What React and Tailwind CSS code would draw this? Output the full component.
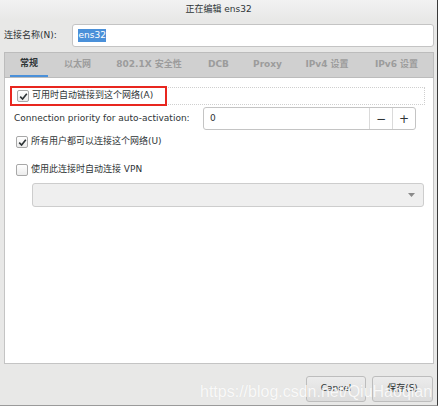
import React from "react";

const tabs = [
  { label: "常规", w: "w-[38px]" },
  { label: "以太网", w: "w-[59px]" },
  { label: "802.1X 安全性", w: "w-[84px]" },
  { label: "DCB", w: "w-[55px]" },
  { label: "Proxy", w: "w-[43px]" },
  { label: "IPv4 设置", w: "w-[76px]" },
  { label: "IPv6 设置", w: "w-[63px]" },
];

const CheckBox = ({ checked }) => (
  <span className="w-[12px] h-[12px] rounded-[2px] border border-[#a8a8a8] bg-gradient-to-b from-white to-[#ececec] flex items-center justify-center">
    {checked && (
      <svg width="9" height="9" viewBox="0 0 9 9">
        <path d="M1.2 4.6 L3.6 7 L7.8 1.8" fill="none" stroke="#2e3436" strokeWidth="1.6" />
      </svg>
    )}
  </span>
);

const App = () => {
  return (
    <div
      className="w-[440px] h-[410px] bg-white relative overflow-hidden text-[9px] text-[#2e3436]"
      style={{ fontFamily: '"DejaVu Sans", "Noto Sans CJK SC", sans-serif' }}
    >
      <div className="w-[438px] h-[406px] bg-[#e8e8e7] border-r border-b border-r-[#3a3a3a] border-b-[#9a9a9a] flex flex-col">
        {/* title bar */}
        <div className="h-[20px] flex items-center justify-center bg-gradient-to-b from-[#f2f2f2] to-[#e8e8e7]">
          正在编辑 ens32
        </div>

        {/* connection name */}
        <div className="flex items-center h-[23px] mt-[4px] pl-[4px] pr-[3px]">
          <span className="w-[68px]">连接名称(N):</span>
          <div className="flex-1 h-full bg-white border border-[#c4c4c4] rounded-[3px] flex items-center pl-[5px]">
            <span className="bg-[#4a90d9] text-white leading-[13px] px-[0.5px]">ens32</span>
          </div>
        </div>

        {/* notebook */}
        <div className="mt-[5px] mx-[4px] w-[430px] flex flex-col h-[312px]">
          <div className="h-[26px] bg-[#d0d0d0] border border-[#bcbcbc] flex items-stretch pl-[5px] font-bold text-[#9c9c9c] whitespace-nowrap">
            {tabs.map((t, i) => (
              <div
                key={t.label}
                className={
                  i === 0
                    ? `${t.w} flex items-center justify-center text-[#2e3436] border-b-2 border-[#4a90d9]`
                    : `${t.w} flex items-center justify-center`
                }
              >
                {t.label}
              </div>
            ))}
          </div>

          <div className="flex-1 bg-white border border-t-0 border-[#c4c4c4] relative">
            {/* auto connect */}
            <div className="mt-[8px] ml-[5px] mr-[8px] h-[20px] relative flex items-center">
              <div className="absolute inset-y-[1px] left-0 right-0 border border-dotted border-[#cfcfcf]" />
              <div className="absolute top-0 left-0 w-[157px] h-[20px] border-2 border-[#e8261f]" />
              <div className="relative flex items-center gap-[3px] pl-[7px]">
                <CheckBox checked />
                <span>可用时自动链接到这个网络(A)</span>
              </div>
            </div>

            {/* priority */}
            <div className="flex items-center mt-[1px] ml-[9px] mr-[17px] h-[23px]">
              <span className="w-[189px]">Connection priority for auto-activation:</span>
              <div className="flex-1 h-full border border-[#c4c4c4] rounded-[3px] flex items-stretch">
                <div className="flex-1 flex items-center pl-[6px]">0</div>
                <div className="w-[23px] border-l border-[#dadada] flex items-center justify-center text-[12px]">−</div>
                <div className="w-[23px] border-l border-[#dadada] flex items-center justify-center text-[12px]">+</div>
              </div>
            </div>

            {/* all users */}
            <div className="flex items-center gap-[3px] ml-[11px] mt-[5px] h-[14px]">
              <CheckBox checked />
              <span>所有用户都可以连接这个网络(U)</span>
            </div>

            {/* vpn */}
            <div className="flex items-center gap-[3px] ml-[11px] mt-[14px] h-[14px]">
              <CheckBox />
              <span>使用此连接时自动连接 VPN</span>
            </div>

            <div className="ml-[27px] mr-[9px] mt-[6px] h-[24px] bg-[#efefef] border border-[#cdcdcd] rounded-[3px] flex items-center justify-end pr-[8px]">
              <svg width="7" height="4" viewBox="0 0 7 4">
                <path d="M0 0 H7 L3.5 4 Z" fill="#8a8a8a" />
              </svg>
            </div>
          </div>
        </div>

        {/* buttons */}
        <div className="flex justify-end gap-[6px] pr-[4px] mt-[12px]">
          <button className="w-[60px] h-[26px] rounded-[3px] border border-[#bdbdbd] bg-gradient-to-b from-[#ececec] to-[#dcdcdc] text-[#2e3436] text-[9px]">
            Cancel
          </button>
          <button className="w-[61px] h-[26px] rounded-[3px] border border-[#bdbdbd] bg-gradient-to-b from-[#ececec] to-[#dcdcdc] text-[#2e3436] text-[9px]">
            保存(S)
          </button>
        </div>
      </div>

      {/* watermark */}
      <div
        className="absolute left-[200px] top-[380px] text-[16px] text-white/85 whitespace-nowrap"
        style={{ fontFamily: '"Liberation Sans", sans-serif', textShadow: "0 0 1px rgba(0,0,0,0.08)" }}
      >
        https://blog.csdn.net/QiuHaoqian
      </div>
    </div>
  );
};

export default App;
